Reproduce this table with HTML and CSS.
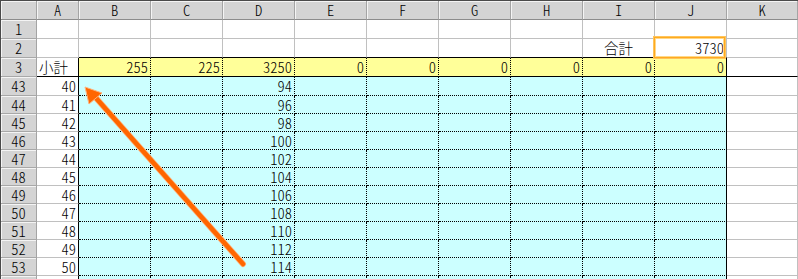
FILE: index.html
```html
<!DOCTYPE html>
<html lang="ja">
<head>
    <meta charset="UTF-8">
    <title>集計シート</title>
    <link rel="stylesheet" href="styles.css">
</head>
<body>
    <div class="sheet">
        <!-- 列見出し -->
        <div class="hd"></div>
        <div class="hd">A</div>
        <div class="hd">B</div>
        <div class="hd">C</div>
        <div class="hd">D</div>
        <div class="hd">E</div>
        <div class="hd">F</div>
        <div class="hd">G</div>
        <div class="hd">H</div>
        <div class="hd">I</div>
        <div class="hd">J</div>
        <div class="hd">K</div>

        <!-- 1行目 -->
        <div class="hd rh">1</div>
        <div></div><div></div><div></div><div></div><div></div><div></div>
        <div></div><div></div><div></div><div></div><div></div>

        <!-- 2行目: 合計 -->
        <div class="hd rh">2</div>
        <div></div>
        <div class="top"></div><div class="top"></div><div class="top"></div><div class="top"></div>
        <div class="top"></div><div class="top"></div><div class="top"></div>
        <div class="top mid">合計</div>
        <div class="top n sel">3730</div>
        <div></div>

        <!-- 3行目: 小計 -->
        <div class="hd rh">3</div>
        <div class="a bb">小計</div>
        <div class="y n">255</div>
        <div class="y n">225</div>
        <div class="y n">3250</div>
        <div class="y n">0</div>
        <div class="y n">0</div>
        <div class="y n">0</div>
        <div class="y n">0</div>
        <div class="y n">0</div>
        <div class="y end n">0</div>
        <div class="bb"></div>

        <!-- 明細 -->
        <div class="hd rh">43</div><div class="a n">40</div>
        <div class="c"></div><div class="c"></div><div class="c n">94</div><div class="c"></div><div class="c"></div>
        <div class="c"></div><div class="c"></div><div class="c"></div><div class="c end"></div><div></div>

        <div class="hd rh">44</div><div class="a n">41</div>
        <div class="c"></div><div class="c"></div><div class="c n">96</div><div class="c"></div><div class="c"></div>
        <div class="c"></div><div class="c"></div><div class="c"></div><div class="c end"></div><div></div>

        <div class="hd rh">45</div><div class="a n">42</div>
        <div class="c"></div><div class="c"></div><div class="c n">98</div><div class="c"></div><div class="c"></div>
        <div class="c"></div><div class="c"></div><div class="c"></div><div class="c end"></div><div></div>

        <div class="hd rh">46</div><div class="a n">43</div>
        <div class="c"></div><div class="c"></div><div class="c n">100</div><div class="c"></div><div class="c"></div>
        <div class="c"></div><div class="c"></div><div class="c"></div><div class="c end"></div><div></div>

        <div class="hd rh">47</div><div class="a n">44</div>
        <div class="c"></div><div class="c"></div><div class="c n">102</div><div class="c"></div><div class="c"></div>
        <div class="c"></div><div class="c"></div><div class="c"></div><div class="c end"></div><div></div>

        <div class="hd rh">48</div><div class="a n">45</div>
        <div class="c"></div><div class="c"></div><div class="c n">104</div><div class="c"></div><div class="c"></div>
        <div class="c"></div><div class="c"></div><div class="c"></div><div class="c end"></div><div></div>

        <div class="hd rh">49</div><div class="a n">46</div>
        <div class="c"></div><div class="c"></div><div class="c n">106</div><div class="c"></div><div class="c"></div>
        <div class="c"></div><div class="c"></div><div class="c"></div><div class="c end"></div><div></div>

        <div class="hd rh">50</div><div class="a n">47</div>
        <div class="c"></div><div class="c"></div><div class="c n">108</div><div class="c"></div><div class="c"></div>
        <div class="c"></div><div class="c"></div><div class="c"></div><div class="c end"></div><div></div>

        <div class="hd rh">51</div><div class="a n">48</div>
        <div class="c"></div><div class="c"></div><div class="c n">110</div><div class="c"></div><div class="c"></div>
        <div class="c"></div><div class="c"></div><div class="c"></div><div class="c end"></div><div></div>

        <div class="hd rh">52</div><div class="a n">49</div>
        <div class="c"></div><div class="c"></div><div class="c n">112</div><div class="c"></div><div class="c"></div>
        <div class="c"></div><div class="c"></div><div class="c"></div><div class="c end"></div><div></div>

        <div class="hd rh">53</div><div class="a n">50</div>
        <div class="c"></div><div class="c"></div><div class="c n">114</div><div class="c"></div><div class="c"></div>
        <div class="c"></div><div class="c"></div><div class="c"></div><div class="c end"></div><div></div>

        <!-- 次の行 (下端で切れる) -->
        <div class="hd rh"></div><div class="a"></div>
        <div class="c"></div><div class="c"></div><div class="c"></div><div class="c"></div><div class="c"></div>
        <div class="c"></div><div class="c"></div><div class="c"></div><div class="c end"></div><div></div>
    </div>

    <!-- 注記の矢印 -->
    <svg class="arrow" width="798" height="279" viewBox="0 0 798 279">
        <line x1="243" y1="264" x2="96" y2="98" stroke="#ffb27a" stroke-width="6" stroke-linecap="round"/>
        <line x1="243" y1="264" x2="96" y2="98" stroke="#ff6600" stroke-width="4.5" stroke-linecap="round"/>
        <polygon points="85,87 102,93 89,104" fill="#ff6600" stroke="#ffb27a" stroke-width="1" stroke-linejoin="round"/>
    </svg>
</body>
</html>
```

FILE: styles.css
```css
body {
    margin: 0;
    background: #fff;
    overflow: hidden;
    font-family: "Noto Sans CJK JP", sans-serif;
    font-size: 14.5px;
    font-weight: 300;
    font-feature-settings: "hwid";
    color: #000;
}
.sheet {
    display: grid;
    grid-template-columns: 36px 42px repeat(9, 72px) 71px;
    grid-template-rows: 19px 19px 19px 19px 19px repeat(11, 18px);
    border-top: 1px solid #4a4a4a;
    border-left: 1px solid #4a4a4a;
    width: 797px;
    height: 278px;
    overflow: hidden;
}
.sheet div {
    box-sizing: border-box;
    border-right: 1px solid #c0c0c0;
    border-bottom: 1px solid #c0c0c0;
    padding: 0 2px;
    line-height: 18px;
    white-space: nowrap;
}
/* 見出し */
.sheet .hd {
    background: #d4d4d4;
    border-right-color: #a4a4a4;
    border-bottom-color: #8c8c8c;
    box-shadow: inset 1px 1px 0 #f4f4f4;
    text-align: center;
    padding: 0;
}
.sheet .rh {
    border-bottom-color: #a8a8a8;
}
.sheet .n {
    text-align: right;
}
.sheet .mid {
    text-align: center;
}
.sheet .top {
    border-bottom-color: #000;
}
.sheet .bb {
    border-bottom-color: #000;
}
/* 小計行 */
.sheet .y {
    background: #ffff99;
    border-right: 1px dotted #000;
    border-bottom: 1px solid #000;
}
/* 明細エリア */
.sheet .c {
    background: #ccffff;
    border-right: 1px dotted #000;
    border-bottom: 1px dotted #000;
}
.sheet .end {
    border-right: 1px solid #000;
}
.sheet .a {
    border-right-color: #000;
}
/* 選択セル */
.sheet .sel {
    position: relative;
}
.sel::after {
    content: "";
    position: absolute;
    left: -2px;
    top: -3px;
    right: 0;
    bottom: -2px;
    border: 1px solid #ffc45a;
    box-shadow: inset 0 0 0 1px #ffaa1f, inset 0 0 0 2px #ffd889;
}
.arrow {
    position: absolute;
    left: 0;
    top: 0;
    pointer-events: none;
}
```
